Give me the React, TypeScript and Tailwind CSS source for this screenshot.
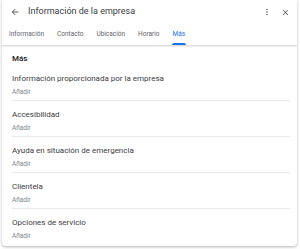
import React from "react";

const items = [
  "Información proporcionada por la empresa",
  "Accesibilidad",
  "Ayuda en situación de emergencia",
  "Clientela",
  "Opciones de servicio",
];

export default function App() {
  return (
    <div className="w-[300px] h-[249px] bg-white overflow-hidden" style={{ fontFamily: "Roboto, 'Noto Sans', sans-serif" }}>
      <div className="ml-[2px] w-[295px] h-[246px] bg-white rounded-b-[4px] shadow-[0_1px_3px_rgba(0,0,0,0.3)] flex flex-col overflow-hidden">
        <div className="shadow-[0_1px_2px_rgba(0,0,0,0.2)] relative z-10">
          <div className="h-[24px] flex items-center pl-[8px] pr-[6px]">
            <svg width="10" height="10" viewBox="0 0 24 24" className="text-[#5f6368]">
              <path d="M20 11H7.83l5.59-5.59L12 4l-8 8 8 8 1.41-1.41L7.83 13H20v-2z" fill="currentColor" />
            </svg>
            <div className="ml-[8px] text-[9px] text-[#3c4043]">Información de la empresa</div>
            <div className="flex-1" />
            <svg width="10" height="10" viewBox="0 0 24 24" className="text-[#5f6368]">
              <path d="M12 8c1.1 0 2-.9 2-2s-.9-2-2-2-2 .9-2 2 .9 2 2 2zm0 2c-1.1 0-2 .9-2 2s.9 2 2 2 2-.9 2-2-.9-2-2-2zm0 6c-1.1 0-2 .9-2 2s.9 2 2 2 2-.9 2-2-.9-2-2-2z" fill="currentColor" />
            </svg>
            <svg width="9" height="9" viewBox="0 0 24 24" className="text-[#5f6368] ml-[9px] mr-[1px]">
              <path d="M19 6.41L17.59 5 12 10.59 6.41 5 5 6.41 10.59 12 5 17.59 6.41 19 12 13.41 17.59 19 19 17.59 13.41 12z" fill="currentColor" />
            </svg>
          </div>
          <div className="h-[21px] flex items-stretch pl-[6px] pt-[1px] text-[6.5px] text-[#5f6368]">
            <div className="px-[1px] flex items-center">Información</div>
            <div className="ml-[11px] px-[1px] flex items-center">Contacto</div>
            <div className="ml-[11px] px-[1px] flex items-center">Ubicación</div>
            <div className="ml-[11px] px-[1px] flex items-center">Horario</div>
            <div className="ml-[11px] px-[1px] flex items-center relative text-[#1a73e8]">
              Más
              <div className="absolute left-0 right-0 bottom-0 h-[2px] bg-[#1a73e8] rounded-t-[2px]" />
            </div>
          </div>
        </div>
        <div className="pl-[10px] pr-[7px] pt-[8px]">
          <div className="text-[8px] font-medium text-[#202124] leading-[12px]">Más</div>
          <div>
            {items.map((t, i) => (
              <div key={t} className={`pt-[8px] pb-[2px] ${i < items.length - 1 ? "border-b border-[#e8eaed]" : ""}`}>
                <div className="text-[8px] text-[#3c4043] leading-[12px]">{t}</div>
                <div className="text-[6.5px] text-[#80868b] leading-[12px] mt-[1px]">Añadir</div>
              </div>
            ))}
          </div>
        </div>
      </div>
    </div>
  );
}
